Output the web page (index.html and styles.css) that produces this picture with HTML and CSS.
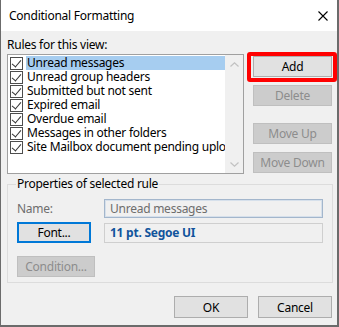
FILE: index.html
```html
<!DOCTYPE html>
<html lang="en">
<head>
    <meta charset="UTF-8">
    <title>Conditional Formatting</title>
    <link rel="stylesheet" href="styles.css">
</head>
<body>

<div class="window">
    <div class="titlebar">
        <span class="title">Conditional Formatting</span>
        <svg class="close" width="10" height="10" viewBox="0 0 10 10">
            <path d="M0.5 0.5L9.5 9.5M9.5 0.5L0.5 9.5" stroke="#000" stroke-width="1.1" fill="none"/>
        </svg>
    </div>

    <div class="content">
        <div class="caption">Rules for this view:</div>
        <div class="top-row">
            <div class="listbox">
                <ul class="rules">
                    <li class="selected"><span class="check"></span><span class="rule-text">Unread messages</span></li>
                    <li><span class="check"></span><span class="rule-text">Unread group headers</span></li>
                    <li><span class="check"></span><span class="rule-text">Submitted but not sent</span></li>
                    <li><span class="check"></span><span class="rule-text">Expired email</span></li>
                    <li><span class="check"></span><span class="rule-text">Overdue email</span></li>
                    <li><span class="check"></span><span class="rule-text">Messages in other folders</span></li>
                    <li><span class="check"></span><span class="rule-text">Site Mailbox document pending upload</span></li>
                </ul>
                <div class="scrollbar">
                    <svg width="9" height="5" viewBox="0 0 9 5"><path d="M0.5 4.5L4.5 0.8L8.5 4.5" stroke="#c2c2c2" stroke-width="1.2" fill="none"/></svg>
                    <svg width="9" height="5" viewBox="0 0 9 5"><path d="M0.5 0.5L4.5 4.2L8.5 0.5" stroke="#c2c2c2" stroke-width="1.2" fill="none"/></svg>
                </div>
            </div>
            <div class="side-buttons">
                <div class="highlight-wrap">
                    <button class="btn">Add</button>
                    <span class="marker"></span>
                </div>
                <button class="btn" disabled>Delete</button>
                <button class="btn move-up" disabled>Move Up</button>
                <button class="btn" disabled>Move Down</button>
            </div>
        </div>

        <fieldset class="props">
            <legend>Properties of selected rule</legend>
            <div class="prop-row name-row">
                <span class="prop-label">Name:</span>
                <div class="field name-field">Unread messages</div>
            </div>
            <div class="prop-row">
                <button class="btn font-btn">Font...</button>
                <div class="field font-field">11 pt. Segoe UI</div>
            </div>
            <button class="btn condition-btn" disabled>Condition...</button>
        </fieldset>

        <div class="footer">
            <button class="btn">OK</button>
            <button class="btn">Cancel</button>
        </div>
    </div>
</div>

</body>
</html>
```

FILE: styles.css
```css
*{box-sizing:border-box}
body{
    margin:0;
    font-family:"Noto Sans","Open Sans",sans-serif;
    font-size:12px;
    letter-spacing:-0.25px;
    color:#000;
}
.window{
    width:339px;
    height:327px;
    background:#f0f0f0;
    border-left:1px solid #6b6b6b;
    border-right:2px solid #6b6b6b;
    border-bottom:2px solid #6b6b6b;
}
.titlebar{
    height:31px;
    background:#fff;
    display:flex;
    align-items:center;
    justify-content:space-between;
    padding:0 9px 1px 8px;
}
.title{font-size:12px;}
.close{margin-top:1px;}

.content{padding:0 5px 0 6px;}
.caption{
    padding-top:6px;
    line-height:16px;
    margin-bottom:1px;
}
.top-row{
    display:flex;
    gap:9px;
}
.listbox{
    width:237px;
    height:120px;
    background:#fff;
    border:1px solid #a0a0a0;
    display:flex;
}
.rules{
    list-style:none;
    margin:0;
    padding:1px 0 0 2px;
    flex:1;
    overflow:hidden;
}
.rules li{
    height:14px;
    line-height:14px;
    display:flex;
    align-items:center;
    white-space:nowrap;
}
.check{
    width:13px;
    height:13px;
    flex:none;
    border:1px solid #4d4d4d;
    background:#fff;
    margin-right:3px;
    position:relative;
}
.check:after{
    content:"";
    position:absolute;
    left:3px;
    top:0px;
    width:4px;
    height:8px;
    border-right:1px solid #333;
    border-bottom:1px solid #333;
    transform:rotate(40deg);
}
.rule-text{
    flex:1;
    height:14px;
    line-height:14px;
    padding-left:1px;
}
.rules li.selected .rule-text{background:#a6cdf0;}
.scrollbar{
    width:18px;
    background:#f0f0f0;
    display:flex;
    flex-direction:column;
    justify-content:space-between;
    align-items:center;
    padding:7px 0 6px;
}

.side-buttons{
    display:flex;
    flex-direction:column;
    padding-top:2px;
}
.btn{
    font-family:inherit;
    font-size:12px;
    letter-spacing:-0.25px;
    width:79px;
    height:21px;
    padding:0;
    background:#e1e1e1;
    border:1px solid #adadad;
    color:#000;
}
.btn:disabled{
    background:#cccccc;
    border-color:#bfbfbf;
    color:#8d8d8d;
}
.side-buttons .btn{margin-top:8px;}
.side-buttons .move-up{margin-top:17px;}
.highlight-wrap{
    position:relative;
    height:21px;
}
.highlight-wrap .btn{margin:0;}
.marker{
    position:absolute;
    left:-6px;
    top:-4px;
    right:-5px;
    bottom:-5px;
    border:4px solid #f00;
    border-radius:3px;
}

.props{
    margin:2px -1px 0 0;
    padding:0 9px 5px 9px;
    border:1px solid #dcdcdc;
}
.props legend{
    padding:0 1px;
    margin-left:-1px;
    line-height:16px;
}
.prop-row{
    display:flex;
    align-items:center;
    line-height:16px;
}
.name-row{margin-top:7px;margin-bottom:4px;}
.prop-label{
    width:87px;
    color:#6d6d6d;
}
.field{
    width:219px;
    margin-left:auto;
    padding-left:5px;
}
.name-field{
    height:19px;
    line-height:17px;
    border:1px solid #a3b6cc;
    box-shadow:inset 0 0 0 1px #d6e0eb;
    color:#6d6d6d;
}
.font-btn{
    width:74px;
    border:2px solid #0078d7;
}
.font-field{
    height:20px;
    line-height:18px;
    border:1px solid #cfcfcf;
    color:#11549c;
    font-weight:bold;
}
.condition-btn{
    display:block;
    margin-top:13px;
    width:78px;
}

.footer{
    display:flex;
    justify-content:flex-end;
    gap:10px;
    margin-top:13px;
}
.footer .btn{
    width:74px;
    height:22px;
}
```
